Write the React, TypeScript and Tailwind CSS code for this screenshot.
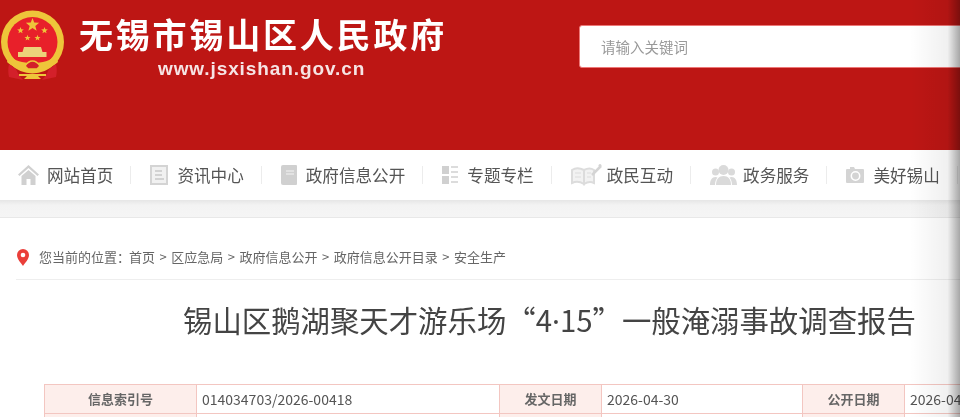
const cjk = "font-['Noto_Sans_CJK_SC','Noto_Sans',sans-serif]";

function starPoints(cx: number, cy: number, r: number) {
  const points: string[] = [];
  for (let i = 0; i < 10; i++) {
    const radius = i % 2 === 0 ? r : r * 0.42;
    const angle = (Math.PI / 5) * i - Math.PI / 2;
    points.push(`${cx + radius * Math.cos(angle)},${cy + radius * Math.sin(angle)}`);
  }
  return points.join(' ');
}

function Emblem() {
  const gold = '#eec53a';
  return (
    <svg width="66" height="72" viewBox="0 0 66 72" className="shrink-0">
      <circle cx="32.500" cy="32" r="31.500" fill={gold} />
      <circle cx="32.500" cy="32" r="25" fill="#e8202a" />
      <polygon points={starPoints(32.5, 15, 7)} fill={gold} />
      <polygon points={starPoints(20.5, 20.500, 3.5)} fill={gold} />
      <polygon points={starPoints(44.5, 20.500, 3.5)} fill={gold} />
      <polygon points={starPoints(27.5, 28, 3.2)} fill={gold} />
      <polygon points={starPoints(37.5, 28, 3.2)} fill={gold} />
      <path d="M24 37h17l1.500 5h4v5H18v-5h4.500z" fill="#ecd27a" />
      <path d="M9 45c6 6 13 8 23.500 8S50 51 56 45l2 7c-5 5-14 8-25.500 8S12 57 7 52z" fill={gold} />
      <path d="M9 54c-1 4-1 9 0 13l14 3c-3-3-6-8-7-11zM56 54c1 4 1 9 0 13l-14 3c3-3 6-8 7-11z" fill="#d3202a" />
      <path d="M19 64h27v2h-8l3 3H24l3-3h-8z" fill={gold} />
      <path d="M25 56c2-3 5-5 7.500-5s5.500 2 7.500 5l-3 3h-9z" fill="#d3202a" stroke={gold} strokeWidth="1.500" />
    </svg>
  );
}

function HomeIcon() {
  return (
    <svg width="21" height="20" viewBox="0 0 21 20" fill="#d0d0d0">
      <path d="M10.500 0 21 9.500 19.500 11 10.500 3 1.500 11 0 9.500z" />
      <path d="M3.500 11 10.500 5l7 6v9h-5v-6h-4v6h-5z" />
    </svg>
  );
}

function NewsIcon() {
  return (
    <svg width="18" height="20" viewBox="0 0 18 20" fill="none" stroke="#d4d4d4">
      <rect x="1" y="1" width="16" height="18" strokeWidth="2" fill="#f1f1f1" />
      <path d="M5 6h7M5 10h7M5 14h9" strokeWidth="1.500" stroke="#c8c8c8" />
    </svg>
  );
}

function BookIcon() {
  return (
    <svg width="16" height="20" viewBox="0 0 16 20" fill="#d0d0d0">
      <path d="M2 0h13a1 1 0 0 1 1 1v18a1 1 0 0 1-1 1H2a2 2 0 0 1-2-2V2a2 2 0 0 1 2-2z" />
      <path d="M5 6h8M5 9h8" stroke="#f4f4f4" strokeWidth="1.200" />
    </svg>
  );
}

function ListIcon() {
  return (
    <svg width="16" height="18" viewBox="0 0 16 18" fill="#d0d0d0">
      <rect width="7" height="8" />
      <rect y="10" width="7" height="8" />
      <path d="M9 0h7v2H9zM9 5h7v2H9zM9 10h7v2H9zM9 15h7v2H9z" fill="#dcdcdc" />
    </svg>
  );
}

function OpenBookIcon() {
  return (
    <svg width="32" height="22" viewBox="1 0 32 22" fill="none" stroke="#dcdcdc" strokeWidth="2">
      <path d="M14 6C10 4 5 4 2 6v13c3-1.500 8-1.500 12 1zM14 6c4-2 7-2 10 0v13c-3-1.500-6-1.500-10 1z" fill="#f2f2f2" />
      <path d="M5 9h6M5 13h6M17 9h4M17 13h4" strokeWidth="1.200" />
      <path d="M22 11 31 2" strokeWidth="2.500" stroke="#d4d4d4" />
      <circle cx="30" cy="1.500" r="1.500" fill="#d4d4d4" stroke="none" />
    </svg>
  );
}

function PeopleIcon() {
  return (
    <svg width="27" height="20" viewBox="0 0 27 20" fill="#dadada">
      <circle cx="13.500" cy="5" r="5" />
      <path d="M6 20c0-6 3-9 7.500-9s7.500 3 7.500 9z" />
      <circle cx="5.500" cy="7" r="3.500" />
      <circle cx="21.500" cy="7" r="3.500" />
      <path d="M0 20c0-5 2-8 5.500-8 1 0 1.500.2 2 .6C6 14.500 5 17 5 20zM27 20c0-5-2-8-5.500-8-1 0-1.500.2-2 .6 1.500 1.900 2.500 4.400 2.500 7.400z" />
    </svg>
  );
}

function CameraIcon() {
  return (
    <svg width="18" height="16" viewBox="0 0 18 16" fill="#d4d4d4">
      <path d="M1 2h3V0h4l1 2h8a1 1 0 0 1 1 1v12a1 1 0 0 1-1 1H1a1 1 0 0 1-1-1V3a1 1 0 0 1 1-1z" />
      <circle cx="9.500" cy="9" r="4.200" fill="none" stroke="#fff" strokeWidth="1.500" />
    </svg>
  );
}

const navItems = [
  { label: '网站首页', icon: <HomeIcon />, gap: 'gap-[8px]' },
  { label: '资讯中心', icon: <NewsIcon />, gap: 'gap-[9px]' },
  { label: '政府信息公开', icon: <BookIcon />, gap: 'gap-[9px]' },
  { label: '专题专栏', icon: <ListIcon />, gap: 'gap-[9px]' },
  { label: '政民互动', icon: <OpenBookIcon />, gap: 'gap-[4px]' },
  { label: '政务服务', icon: <PeopleIcon />, gap: 'gap-[6px]' },
  { label: '美好锡山', icon: <CameraIcon />, gap: 'gap-[9px]' },
];

const crumbs = ['首页', '区应急局', '政府信息公开', '政府信息公开目录', '安全生产'];

export default function App() {
  return (
    <div className={`relative h-[417px] w-[960px] overflow-hidden bg-white blur-[0.4px] ${cjk}`}>
      <header className="flex h-[150px] items-start bg-[#bd1614]">
        <div className="mt-[10px] w-[79px] shrink-0">
          <Emblem />
        </div>
        <div className="flex w-[500px] shrink-0 flex-col">
          <h1 className="mt-[11px] text-[34px] leading-[46px] font-bold tracking-[2.800px] whitespace-nowrap text-white">
            无锡市锡山区人民政府
          </h1>
          <p className="mt-[2px] ml-[79px] font-['Liberation_Sans',sans-serif] text-[19px] leading-[20px] font-bold tracking-[0.900px] text-[#f6e4e4]">
            www.jsxishan.gov.cn
          </p>
        </div>
        <input
          placeholder="请输入关键词"
          className="mt-[25px] h-[43px] w-[400px] shrink-0 rounded-[3px] border border-[#e77] bg-white pl-[21px] text-[14.500px] text-[#444] placeholder:text-[#999]"
        />
      </header>

      <nav className="flex h-[50px] items-center bg-white pl-[18px] text-[16.600px] whitespace-nowrap text-[#555]">
        {navItems.map((item) => (
          <div key={item.label} className="mr-[19px] flex h-[18px] items-center border-r border-[#ececec] pr-[17px]">
            <span className={`flex items-center ${item.gap}`}>
              {item.icon}
              <span>{item.label}</span>
            </span>
          </div>
        ))}
      </nav>

      <div className="h-[18px] border-b border-[#e8e8e8] bg-gradient-to-b from-[#e6e6e6] via-[#f3f3f3] via-30% to-[#f5f5f5]" />

      <main className="pl-[16px]">
        <div className="flex h-[62px] items-center gap-[10px] border-b border-[#eeeeee] pt-[17px] text-[13px] text-[#666]">
          <svg width="12" height="17" viewBox="0 0 12 17" className="ml-[1px] shrink-0">
            <path d="M6 0a6 6 0 0 1 6 6c0 4-4 8-6 11C4 14 0 10 0 6a6 6 0 0 1 6-6z" fill="#ea3f3a" />
            <circle cx="6" cy="6" r="2.300" fill="#fff" />
          </svg>
          <div className="flex items-center gap-[4.500px] whitespace-nowrap">
            <span className="mr-[-4.500px] w-[90px]">您当前的位置：</span>
            {crumbs.map((crumb, i) => (
              <span key={crumb} className="flex items-center gap-[4.500px]">
                {i > 0 && <span>&gt;</span>}
                <span>{crumb}</span>
              </span>
            ))}
          </div>
        </div>

        <h2 className="mt-[18px] ml-[167px] text-[29.400px] leading-[42px] font-normal whitespace-nowrap text-[#444]">
          锡山区鹅湖聚天才游乐场“4<span className="font-['Noto_Sans',sans-serif]">·</span>15”一般淹溺事故调查报告
        </h2>

        <table className="mt-[42px] ml-[28px] w-[1000px] table-fixed border-collapse text-[14px] text-[#555]">
          <tbody>
            {[0, 1].map((row) => (
              <tr key={row} className="h-[29px]">
                <td className="w-[152px] border border-[#f3c6c1] bg-[#fdeeeb] text-center text-[13px] font-bold text-[#666]">
                  {row === 0 && '信息索引号'}
                </td>
                <td className="w-[303px] border border-[#f3c6c1] pl-[5px]">{row === 0 && '014034703/2026-00418'}</td>
                <td className="w-[102px] border border-[#f3c6c1] bg-[#fdeeeb] text-center text-[13px] font-bold text-[#666]">
                  {row === 0 && '发文日期'}
                </td>
                <td className="w-[201px] border border-[#f3c6c1] pl-[5px]">{row === 0 && '2026-04-30'}</td>
                <td className="w-[102px] border border-[#f3c6c1] bg-[#fdeeeb] text-center text-[13px] font-bold text-[#666]">
                  {row === 0 && '公开日期'}
                </td>
                <td className="border border-[#f3c6c1] pl-[5px]">{row === 0 && '2026-04-30'}</td>
              </tr>
            ))}
          </tbody>
        </table>
      </main>

      <div className="pointer-events-none absolute inset-y-0 right-0 w-[50px] bg-gradient-to-r from-black/0 via-black/6 via-75% to-black/35" />
    </div>
  );
}
